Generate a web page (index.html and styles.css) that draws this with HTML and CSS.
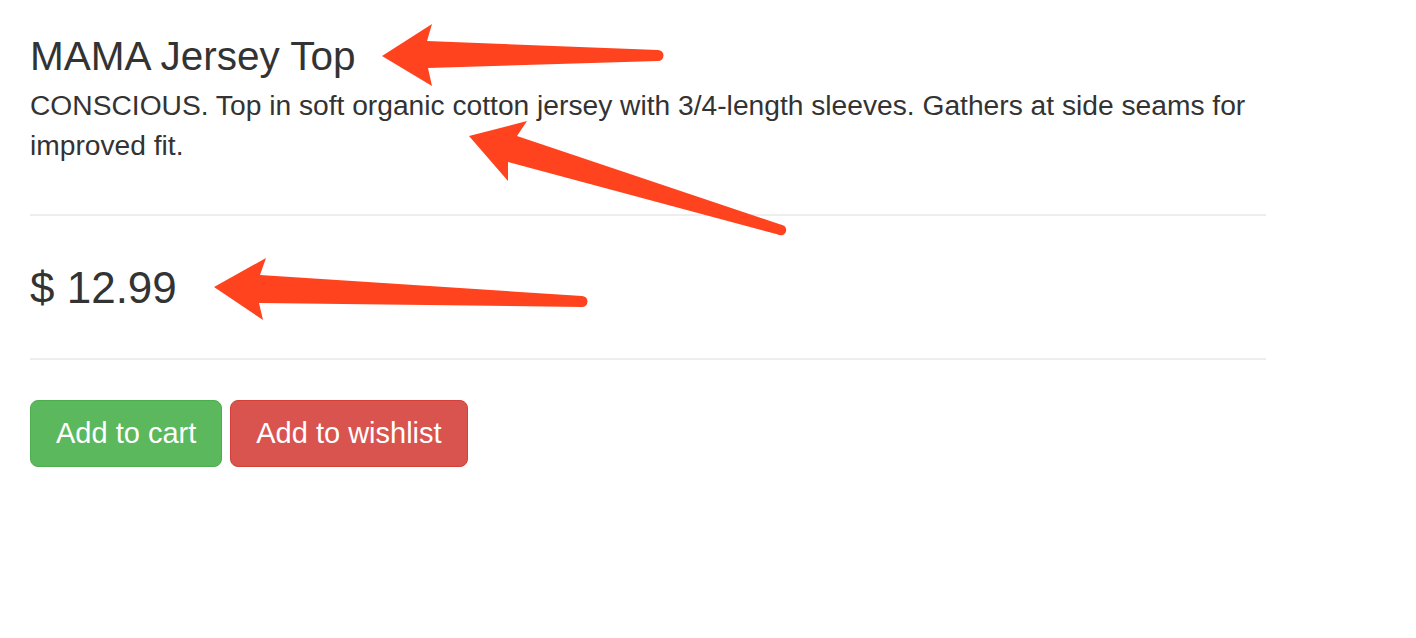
FILE: index.html
```html
<!DOCTYPE html>
<html lang="en">
<head>
<meta charset="utf-8">
<title>MAMA Jersey Top</title>
<link rel="stylesheet" href="styles.css">
</head>
<body>
<main class="product">
  <h1 class="product-title">MAMA Jersey Top</h1>
  <p class="product-desc">CONSCIOUS. Top in soft organic cotton jersey with 3/4-length sleeves. Gathers at side seams for improved fit.</p>
  <hr class="divider divider-top">
  <div class="product-price">$ 12.99</div>
  <hr class="divider divider-bottom">
  <div class="actions">
    <button class="btn btn-success" type="button">Add to cart</button>
    <button class="btn btn-danger" type="button">Add to wishlist</button>
  </div>
</main>
<svg class="annotations" width="1416" height="638" viewBox="0 0 1416 638" aria-hidden="true">
  <g class="arrow">
    <polygon points="382,56 432,24 427,41 658,50 658,61 428,68 432,86"/>
    <circle cx="658" cy="55.5" r="5.5"/>
    <polygon points="469,136 527,121 517,136 782,225 780,235 508,162 508,181"/>
    <circle cx="781" cy="230" r="5.2"/>
    <polygon points="214,287 266,258 260,275 582,296 582,307 259,303 263,320"/>
    <circle cx="582" cy="301.5" r="5.5"/>
  </g>
</svg>
</body>
</html>
```
FILE: styles.css
```css
html, body {
  margin: 0;
  padding: 0;
  background: #ffffff;
}

body {
  font-family: "Liberation Sans", Helvetica, Arial, sans-serif;
  color: #333333;
  width: 1416px;
  height: 638px;
  overflow: hidden;
  position: relative;
}

.product {
  width: 1236px;
  padding: 34px 0 0 30px;
  display: flex;
  flex-direction: column;
  align-items: flex-start;
}

.product-title {
  margin: 0;
  font-size: 40.5px;
  line-height: 44px;
  font-weight: 400;
}

.product-desc {
  margin: 7px 0 0;
  font-size: 28.2px;
  line-height: 40px;
}

.divider {
  align-self: stretch;
  border: 0;
  border-top: 2px solid #eeeeee;
  margin: 0;
  height: 0;
}

.divider-top {
  margin-top: 49px;
}

.product-price {
  margin: 47px 0 45px;
  font-size: 44px;
  line-height: 50px;
}

.actions {
  margin-top: 40px;
  display: flex;
  gap: 8px;
}

.btn {
  font-family: "Liberation Sans", Helvetica, Arial, sans-serif;
  font-size: 29px;
  line-height: 41px;
  padding: 12px 25px;
  border: 1px solid transparent;
  border-radius: 8px;
  color: #ffffff;
  cursor: pointer;
}

.btn-success {
  background: #5cb85c;
  border-color: #4cae4c;
}

.btn-danger {
  background: #d9534f;
  border-color: #d43f3a;
}

.annotations {
  position: absolute;
  top: 0;
  left: 0;
  pointer-events: none;
}

.arrow {
  fill: #ff431f;
}
```
